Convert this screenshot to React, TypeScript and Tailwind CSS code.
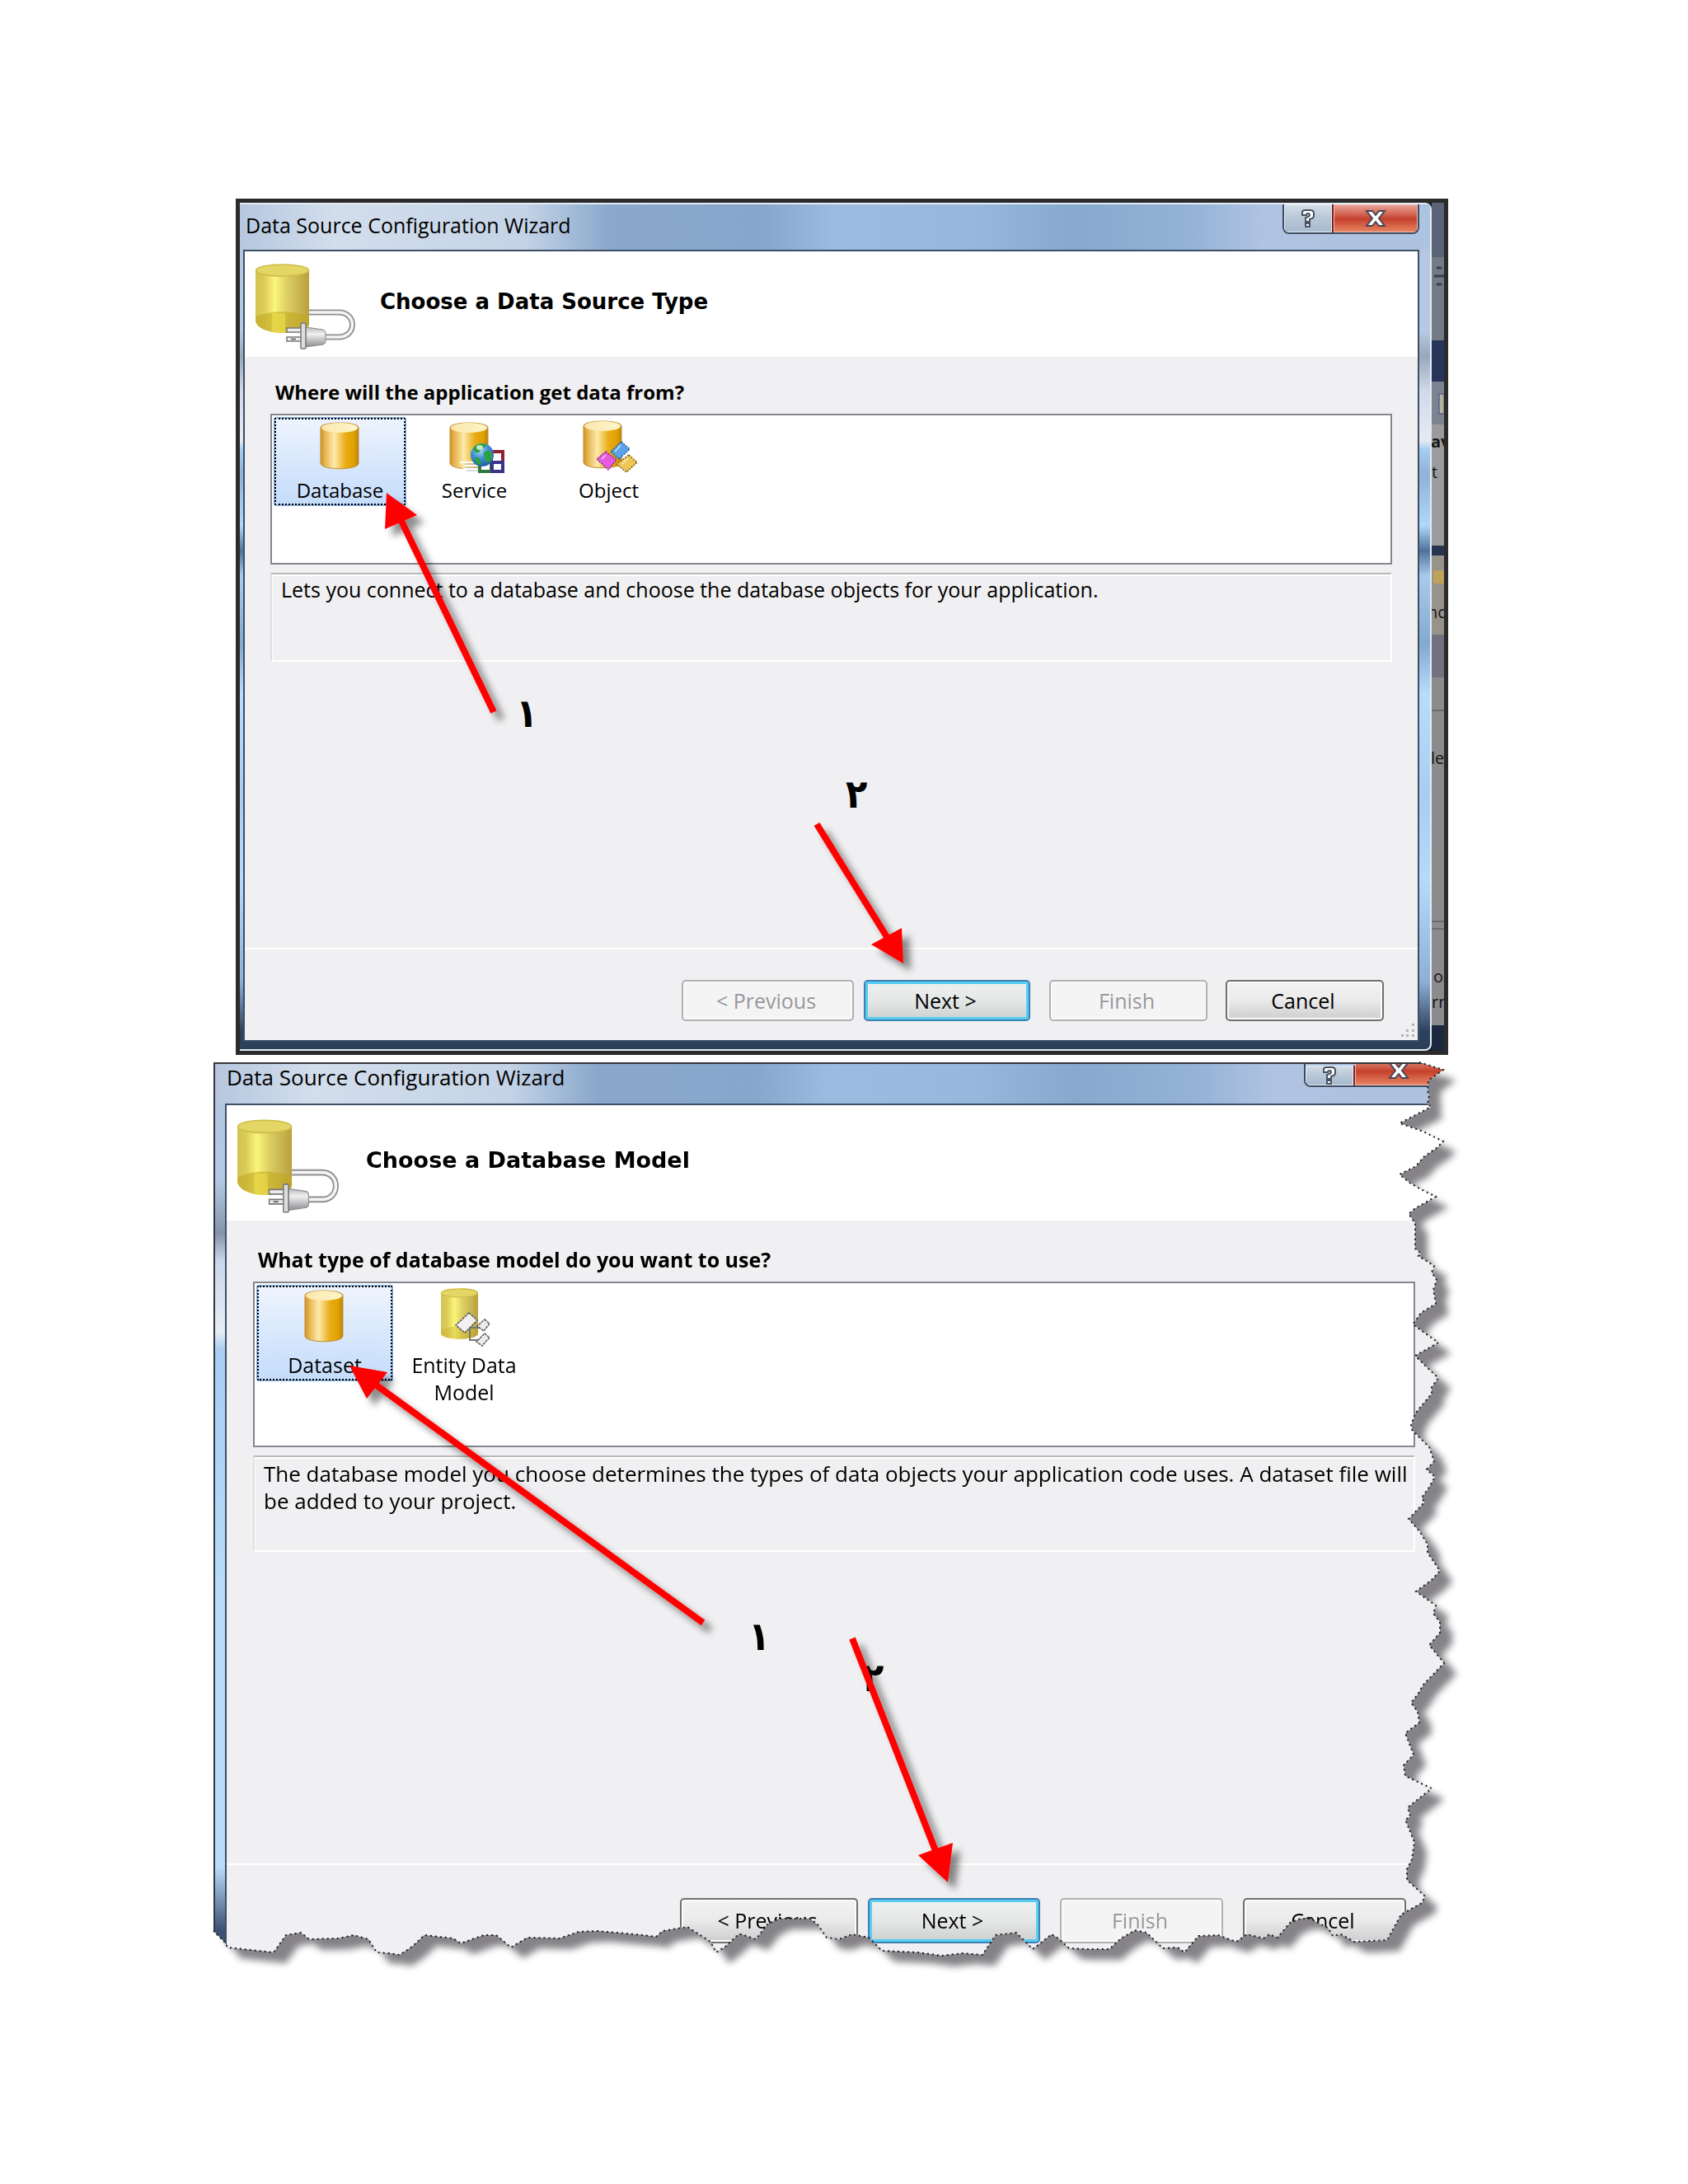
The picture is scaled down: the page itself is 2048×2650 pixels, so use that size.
import type { ReactNode } from "react";
import clsx from "clsx";

const TORN_EDGE =
  "1722,1289 1751,1298 1733,1311 1732,1324 1734,1329 1732,1339 1736,1343 1698,1363 1727,1373 1751,1385 1744,1392 1727,1404 1718,1415 1698,1425 1710,1435 1722,1442 1742,1452 1717,1466 1709,1473 1717,1484 1717,1515 1724,1521 1721,1524 1740,1536 1737,1544 1743,1553 1739,1565 1742,1582 1724,1593 1714,1607 1745,1629 1717,1645 1727,1655 1745,1672 1737,1683 1737,1691 1717,1715 1712,1729 1713,1735 1734,1756 1740,1773 1731,1783 1741,1792 1733,1806 1725,1817 1728,1823 1709,1843 1723,1859 1732,1874 1732,1884 1747,1906 1737,1917 1718,1931 1742,1948 1739,1958 1747,1968 1747,1981 1734,1996 1752,2018 1727,2044 1720,2056 1712,2066 1720,2077 1722,2090 1705,2103 1715,2129 1703,2142 1705,2155 1737,2170 1708,2193 1711,2204 1705,2208 1716,2235 1713,2256 1707,2268 1707,2281 1729,2301 1725,2309 1700,2323 1683,2354 1643,2356 1627,2347 1617,2349 1612,2340 1590,2328 1578,2328 1565,2333 1550,2351 1540,2347 1533,2352 1513,2347 1500,2356 1491,2353 1478,2348 1454,2349 1437,2369 1429,2363 1411,2364 1391,2345 1377,2342 1360,2352 1346,2365 1320,2365 1297,2364 1284,2352 1276,2347 1253,2365 1233,2345 1208,2348 1192,2372 1168,2370 1143,2373 1114,2369 1070,2367 1054,2351 1034,2347 1018,2353 1003,2351 992,2335 983,2328 945,2328 931,2335 917,2353 900,2347 896,2347 880,2362 869,2369 862,2356 834,2338 804,2343 796,2350 781,2348 725,2343 702,2344 679,2352 640,2351 628,2358 620,2363 602,2348 587,2348 559,2358 550,2352 515,2348 500,2362 485,2372 472,2370 457,2369 447,2353 429,2348 411,2352 375,2353 365,2345 347,2348 332,2369 304,2366 276,2363 273,2357 259,2343";

function Defs() {
  return (
    <svg className="absolute size-0" aria-hidden="true">
      <defs>
        <linearGradient id="gold" x1="0" x2="1" y1="0" y2="0">
          <stop offset="0" stopColor="#cf9323" />
          <stop offset="0.12" stopColor="#e8b551" />
          <stop offset="0.36" stopColor="#fdeaaa" />
          <stop offset="0.66" stopColor="#e9ac16" />
          <stop offset="0.88" stopColor="#e0a000" />
          <stop offset="1" stopColor="#b98212" />
        </linearGradient>
        <linearGradient id="goldTop" x1="0" x2="1" y1="0" y2="0">
          <stop offset="0" stopColor="#fbe7ae" />
          <stop offset="1" stopColor="#fdf5c8" />
        </linearGradient>
        <linearGradient id="glass" x1="0" x2="1" y1="0" y2="0">
          <stop offset="0" stopColor="#d2c34e" />
          <stop offset="0.16" stopColor="#dccb58" />
          <stop offset="0.36" stopColor="#fbf57a" />
          <stop offset="0.6" stopColor="#dccd62" />
          <stop offset="1" stopColor="#b9a03e" />
        </linearGradient>
        <linearGradient id="plug" x1="0" x2="0" y1="0" y2="1">
          <stop offset="0" stopColor="#b9b9bb" />
          <stop offset="0.35" stopColor="#f0f0f1" />
          <stop offset="1" stopColor="#8e8e92" />
        </linearGradient>
        <radialGradient id="globe" cx="0.4" cy="0.3" r="0.8">
          <stop offset="0" stopColor="#a9dbf5" />
          <stop offset="0.45" stopColor="#3f8fd6" />
          <stop offset="1" stopColor="#1d4f9c" />
        </radialGradient>
        <clipPath id="tear" clipPathUnits="objectBoundingBox">
          <polygon points={`259,1289 ${TORN_EDGE}`} transform="scale(0.00066979 0.00092166) translate(-259 -1289)" />
        </clipPath>
        <filter id="soft" x="-20%" y="-20%" width="150%" height="150%">
          <feDropShadow dx="9" dy="9" stdDeviation="4" floodColor="#000" floodOpacity="0.45" />
        </filter>
      </defs>
    </svg>
  );
}

function PlugIcon({ className }: { className: string }) {
  return (
    <svg viewBox="0 0 124 108" preserveAspectRatio="none" className={className} aria-hidden="true">
      <path d="M2 10 C2 1 67 1 67 10 V76 C67 80 50 86 35 86 C18 86 2 80 2 70Z" fill="url(#glass)" />
      <path d="M2 67 C14 58 55 58 67 67 V76 C67 80 50 86 35 86 C18 86 2 80 2 70Z" fill="#c2a820" opacity="0.6" />
      <path d="M22 62 H38 V86 H28 C24 86 22 84 22 80Z" fill="#f3e24d" opacity="0.55" />
      <ellipse cx="34.500" cy="10" rx="32" ry="7" fill="#e3d664" stroke="#cdbd47" strokeWidth="1.500" />
      <path d="M67 61 H103 C125 61 125 91 103 91 H86" fill="none" stroke="#8f8f92" strokeWidth="7" />
      <path d="M67 61 H103 C125 61 125 91 103 91 H86" fill="none" stroke="#f4f4f4" strokeWidth="3.500" />
      <path d="M57 80 H40 V85 H57 M57 91 H40 V96 H57" fill="#ededee" stroke="#77777a" strokeWidth="1.500" />
      <path d="M45 93.500 H51" stroke="#555" strokeWidth="1.500" />
      <path d="M63 79 L84 82 Q87 83 87 86 V96 Q87 99 84 100 L63 103Z" fill="url(#plug)" stroke="#88888b" />
      <rect x="57" y="74" width="6" height="31" rx="1" fill="#dededf" stroke="#77777a" strokeWidth="1.500" />
    </svg>
  );
}

function Cylinder({ x, y, h = 57 }: { x: number; y: number; h?: number }) {
  return (
    <g transform={`translate(${x} ${y})`}>
      <path
        d={`M0 7 C0 -1 46 -1 46 7 V${h - 7} C46 ${h + 2} 0 ${h + 2} 0 ${h - 7}Z`}
        fill="url(#gold)"
        stroke="#c08f30"
        strokeWidth="1"
      />
      <ellipse cx="23" cy="7" rx="22" ry="6" fill="url(#goldTop)" />
    </g>
  );
}

function TileSvg({ tall, children }: { tall?: boolean; children: ReactNode }) {
  return (
    <svg
      viewBox={tall ? "0 0 80 72" : "0 0 80 64"}
      className={clsx("w-20 shrink-0 overflow-visible", tall ? "h-18" : "h-16")}
      aria-hidden="true"
    >
      {children}
    </svg>
  );
}

function DatabaseIcon() {
  return (
    <TileSvg>
      <Cylinder x={16} y={1} />
    </TileSvg>
  );
}

function DatasetIcon() {
  return (
    <TileSvg tall>
      <Cylinder x={16} y={1} h={63} />
    </TileSvg>
  );
}

function ServiceIcon() {
  return (
    <TileSvg>
      <Cylinder x={10} y={1} />
      <path d="M22 50 H46 M28 54 H46 M26 58 H46 M30 62 H46" stroke="#fff" strokeWidth="2" />
      <path d="M28 52 H45 M28 56 H45 M30 60 H45" stroke="#b7b9c4" strokeWidth="1" />
      <rect x="60" y="37" width="14" height="13" fill="#fff" stroke="#8d2233" strokeWidth="4" />
      <rect x="46" y="50" width="14" height="11" fill="#fff" stroke="#2f7a3a" strokeWidth="4" />
      <rect x="61" y="50" width="13" height="11" fill="#fff" stroke="#39348a" strokeWidth="4" />
      <circle cx="49" cy="41" r="14" fill="url(#globe)" />
      <path d="M38 33 C42 27 50 26 54 29 C52 33 47 33 46 37 C43 40 39 38 38 33Z M52 37 C58 34 63 38 61 45 C58 51 54 52 53 47 C51 43 50 40 52 37Z M40 44 C45 43 49 47 47 53 C43 53 40 49 40 44Z" fill="#2da044" />
      <ellipse cx="46" cy="32" rx="4" ry="3" fill="#e8fbe4" opacity="0.8" />
    </TileSvg>
  );
}

function ObjectIcon() {
  return (
    <TileSvg>
      <Cylinder x={9} y={-1} h={58} />
      <polygon points="55,25 65,34 52,46 42,37" fill="#5ba4ea" stroke="#1f5da5" strokeWidth="1.500" strokeDasharray="2 1.500" />
      <polygon points="36,37 49,47 39,59 25,46" fill="#e45be0" stroke="#8f2a92" strokeWidth="1.500" strokeDasharray="2 1.500" />
      <polygon points="64,41 74,50 61,62 49,52" fill="#edc655" stroke="#7a5a12" strokeWidth="1.500" strokeDasharray="2 1.500" />
      <path d="M54 29 L47 37 M36 41 L31 46 M63 45 L56 52" stroke="#fff" strokeWidth="2" opacity="0.5" />
    </TileSvg>
  );
}

function EntityIcon() {
  return (
    <TileSvg tall>
      <path d="M12 5 C12 -3 57 -3 57 5 V54 C57 63 12 63 12 54Z" fill="url(#glass)" />
      <ellipse cx="34.500" cy="5" rx="22" ry="5" fill="#e3d664" stroke="#cbb944" />
      <path d="M12 50 C20 44 49 44 57 50 V54 C57 63 12 63 12 54Z" fill="#c2a820" opacity="0.35" />
      <path d="M47 44 V62 H58 M47 47 H60" fill="none" stroke="#77777a" strokeWidth="2" />
      <polygon points="46,29 56,38 41,53 30,44" fill="#f1f1f2" stroke="#58585b" strokeWidth="1.500" strokeDasharray="3 1" />
      <polygon points="65,37 71,42 64,51 56,45" fill="#ececed" stroke="#58585b" strokeWidth="1.500" strokeDasharray="3 1" />
      <polygon points="65,54 71,59 62,69 55,64" fill="#ececed" stroke="#58585b" strokeWidth="1.500" strokeDasharray="3 1" />
    </TileSvg>
  );
}

function Tile({ icon, label, selected, className }: { icon: ReactNode; label: string; selected?: boolean; className: string }) {
  return (
    <button
      type="button"
      role="option"
      aria-selected={!!selected}
      className={clsx(
        "flex flex-col items-center self-start rounded-[3px] border-2 pt-[3px] text-center",
        selected
          ? "border-[#86b0e2] bg-linear-to-b from-[#eef4fd] to-[#c4dcfb] outline-2 -outline-offset-3 outline-dotted outline-black"
          : "border-transparent",
        className,
      )}
    >
      {icon}
      <span className="mt-1 block px-4">{label}</span>
    </button>
  );
}

function CaptionButtons({ className, closeClass }: { className: string; closeClass: string }) {
  return (
    <div className={clsx("flex overflow-hidden rounded-b-lg border-2 border-t-0 border-[#3d4b5e]", className)}>
      <button
        type="button"
        aria-label="Help"
        className="flex w-[60px] shrink-0 items-center justify-center border-r-2 border-[#7c1f1d] bg-linear-to-b from-[#d5dfe9] from-0% via-[#b9c7d6] via-48% to-[#a6bacf] inset-shadow-[0_0_0_1px_#e8eff7]"
      >
        <svg viewBox="0 0 18 24" className="h-6 w-[18px]">
          <path d="M2 7 V5 Q2 2 5 2 H12 Q16 2 16 6 V9 Q16 12 11 13 V16 H6 V11 Q11 10 11 8 Q11 6 9 6 Q7 6 7 8 H2Z M6 18 H11 V22 H6Z" fill="#fff" stroke="#4a5260" strokeWidth="2" />
        </svg>
      </button>
      <button
        type="button"
        aria-label="Close"
        className={clsx(
          "flex shrink-0 items-center justify-center bg-linear-to-b from-[#e9a59c] from-0% via-[#c5402c] via-52% to-[#e88563] inset-shadow-[0_0_0_1px_#f0c2b8]",
          closeClass,
        )}
      >
        <svg viewBox="0 0 26 20" className="h-5 w-[26px]">
          <path d="M2 1 H9 L13 6 L17 1 H24 L17 10 L24 19 H17 L13 14 L9 19 H2 L9 10Z" fill="#fff" stroke="#4a4654" strokeWidth="2" />
        </svg>
      </button>
    </div>
  );
}

type Kind = "normal" | "primary" | "disabled";

function WizardButton({ kind = "normal", className, children }: { kind?: Kind; className: string; children: ReactNode }) {
  return (
    <button
      type="button"
      disabled={kind === "disabled"}
      className={clsx(
        "rounded-[5px] border-2 pr-1 text-center text-[25px]",
        kind === "normal" &&
          "border-[#707070] bg-linear-to-b from-[#f2f2f2] from-0% via-[#ebebeb] via-48% to-[#cfcdcf] inset-shadow-[0_0_0_2px_#fbfbfb]",
        kind === "primary" &&
          "border-[#3c7fb1] bg-linear-to-b from-[#eff1f1] from-0% via-[#e5e8e7] via-48% to-[#cdd0ce] inset-shadow-[0_0_0_3px_#57cdf3]",
        kind === "disabled" && "border-[#b1b1b3] bg-[#f5f4f5] text-[#97979a] inset-shadow-[0_0_0_2px_#fbfbfb]",
        className,
      )}
    >
      {children}
    </button>
  );
}

type Point = [number, number];

function Arrow({ tail, neck, head }: { tail: Point; neck: Point; head: [Point, Point, Point] }) {
  return (
    <g filter="url(#soft)" fill="#fe0000">
      <line x1={tail[0]} y1={tail[1]} x2={neck[0]} y2={neck[1]} stroke="#fe0000" strokeWidth="8" />
      <polygon points={head.map((p) => p.join(",")).join(" ")} />
    </g>
  );
}

function Digit({ x, y, children }: { x: number; y: number; children: string }) {
  return (
    <text x={x} y={y} className="fill-black font-['DejaVu_Sans_Condensed','DejaVu_Sans',sans-serif] text-[48px] font-bold">
      {children}
    </text>
  );
}

function SourceTypeWindow() {
  return (
    <section className="relative ml-[27px] flex border-[5px] border-[#2b2b2b] bg-[#141c28] text-[24px] leading-8">
      <div className="min-w-0 flex-1 rounded-r-lg border-t-2 border-r-2 border-b-2 border-[#e3ebf5] bg-[linear-gradient(180deg,#b3c5df_0%,#b7c8e4_15%,#97a8bb_18%,#d0d9ea_22%,#e6ebf3_28%,#a5cdf0_29%,#8fb2d6_32%,#b0d8f8_38%,#4f739b_41%,#a6cbea_44%,#84a9cf_52%,#b9dcfb_58%,#a9cdf0_70%,#b7dafa_80%,#8eafd6_92%,#2c3f5b_98%)]">
        <header className="flex h-[55px] items-start justify-between bg-[linear-gradient(90deg,#b5c7df_0%,#d3deec_8%,#c4d3e6_24%,#8aa8cc_31%,#86a6cb_44%,#9bbbe0_50%,#97b7dc_62%,#86a9cd_70%,#94b3d6_80%,#b0c3e2_86%,#aec3e0_100%)] pr-[13px] pl-[7px]">
          <h2 className="pt-[9px] text-[25px]">Data Source Configuration Wizard</h2>
          <CaptionButtons className="h-9" closeClass="w-[102px]" />
        </header>
        <div className="mr-[13px] mb-[9px] ml-[4px] border-2 border-[#3d4f66] bg-[#f0eff1]">
          <div className="flex h-32 items-start bg-white pt-[13px] pl-[11px]">
            <PlugIcon className="h-[108px] w-[124px]" />
            <h1 className="mt-8 ml-[29px] font-['DejaVu_Sans',sans-serif] text-[26px] font-bold">Choose a Data Source Type</h1>
          </div>
          <div className="pt-[27px] pr-[31px] pl-[31px]">
            <h3 id="source-label" className="pl-[6px] font-bold">Where will the application get data from?</h3>
            <div role="listbox" aria-labelledby="source-label" className="mt-[10px] flex h-[183px] gap-[2px] border-2 border-[#828790] bg-white pt-[2px] pl-[2px]">
              <Tile className="h-[108px] w-[161px]" icon={<DatabaseIcon />} label="Database" selected />
              <Tile className="h-[108px] w-[161px]" icon={<ServiceIcon />} label="Service" />
              <Tile className="h-[108px] w-[161px]" icon={<ObjectIcon />} label="Object" />
            </div>
            <p className="mt-[10px] h-[108px] border-2 border-t-[#b9b9bb] border-r-white border-b-white border-l-[#dededf] px-[11px] pt-[2px] text-[25px] inset-shadow-[1px_2px_0_#fff]">
              Lets you connect to a database and choose the database objects for your application.
            </p>
          </div>
          <footer className="mt-[347px] flex justify-end border-t-2 border-white pt-[37px] pr-[41px] pb-[23px]">
            <WizardButton kind="disabled" className="mr-3 h-[50px] w-[209px]">&lt; Previous</WizardButton>
            <WizardButton kind="primary" className="mr-[23px] h-[50px] w-[202px]">Next &gt;</WizardButton>
            <WizardButton kind="disabled" className="mr-[22px] h-[50px] w-48">Finish</WizardButton>
            <WizardButton className="h-[50px] w-48">Cancel</WizardButton>
          </footer>
        </div>
      </div>

      {/* Sliver of the desktop behind the dialog */}
      <svg viewBox="1737 246 15 1029" preserveAspectRatio="none" className="w-[15px] shrink-0 self-stretch bg-[#8b8b8d]" aria-hidden="true">
        <path d="M1737 246 H1752 V312 H1737Z" fill="#5a6476" />
        <path d="M1737 312 H1752 V413 H1737Z" fill="#727a83" />
        <path d="M1743 325 H1749 M1740 335 H1752 M1743 345 H1749" stroke="#3a3f47" strokeWidth="3" />
        <path d="M1737 413 H1752 V463 H1737Z" fill="#27355a" />
        <path d="M1737 463 H1752 V515 H1737Z" fill="#7d8491" />
        <path d="M1746 478 H1752 V502 H1746Z" fill="#b5b29a" stroke="#3a4a8a" />
        <path d="M1737 515 H1752 V662 H1737Z" fill="#9b9b9d" />
        <path d="M1737 662 H1752 V674 H1737Z" fill="#263452" />
        <path d="M1737 674 H1752 V770 H1737Z" fill="#98938a" />
        <path d="M1739 692 H1752 V708 H1739Z" fill="#c0a25a" />
        <path d="M1737 770 H1752 V822 H1737Z" fill="#73717f" />
        <path d="M1737 1118 H1752 M1737 1127 H1752 M1737 862 H1752" stroke="#6c6c6e" strokeWidth="2" />
        <path d="M1737 1244 H1752 V1275 H1737Z" fill="#1b2940" />
        <g className="fill-[#151518] text-[20px]">
          <text x="1736" y="543" className="font-bold">av</text>
          <text x="1737" y="580">t</text>
          <text x="1732" y="750">nc</text>
          <text x="1736" y="927">le</text>
          <text x="1739" y="1192">o</text>
          <text x="1737" y="1223">rn</text>
        </g>
      </svg>

      <svg viewBox="291 246 1461 1029" preserveAspectRatio="none" className="pointer-events-none absolute inset-0 size-full">
        <g fill="#b5b5b8">
          <path d="M1713 1242 h3 v3 h-3z M1713 1249 h3 v3 h-3z M1713 1255 h3 v3 h-3z M1706 1249 h3 v3 h-3z M1706 1255 h3 v3 h-3z M1700 1255 h3 v3 h-3z" />
        </g>
        <Digit x={626} y={882}>١</Digit>
        <Digit x={1026} y={980}>٢</Digit>
        <Arrow tail={[599, 864]} neck={[486, 630]} head={[[469, 598], [506, 625], [467, 642]]} />
        <Arrow tail={[991, 1000]} neck={[1078, 1140]} head={[[1096, 1169], [1057, 1146], [1094, 1126]]} />
      </svg>
    </section>
  );
}

function DatabaseModelWindow() {
  return (
    <section className="relative mt-[9px] mr-[5px] text-[25px] leading-[33px]">
      <div className="drop-shadow-[15px_13px_4px_#858387]">
        <div className="border-t-2 border-l-2 border-[#33373d] bg-[linear-gradient(180deg,#b3c5df_0%,#b7c8e4_13%,#8395ab_19%,#c9d6ea_22%,#e8eef6_30%,#a9cdf3_32%,#b9dcfb_60%,#b9dcfb_90%,#3c5273_97%)] [clip-path:url(#tear)]">
          <header className="flex h-12 items-start justify-between bg-[linear-gradient(90deg,#b5c7df_0%,#d3deec_8%,#c4d3e6_24%,#8aa8cc_31%,#86a6cb_44%,#9bbbe0_50%,#97b7dc_62%,#86a9cd_70%,#94b3d6_80%,#b0c3e2_86%,#aec3e0_100%)] pl-[14px]">
            <h2 className="text-[26px]">Data Source Configuration Wizard</h2>
            <CaptionButtons className="h-7 items-end" closeClass="h-9 w-[106px]" />
          </header>
          <div className="ml-[12px] border-t-2 border-l-2 border-[#3d4f66] bg-[#f0eff1]">
            <div className="flex h-[140px] items-start bg-white pt-[15px] pl-[11px]">
              <PlugIcon className="h-[118px] w-[126px]" />
              <h1 className="mt-[35px] ml-[32px] font-['DejaVu_Sans',sans-serif] text-[27px] font-bold">Choose a Database Model</h1>
            </div>
            <div className="pt-[31px] pr-[35px] pl-8">
              <h3 id="model-label" className="pl-[6px] font-bold">What type of database model do you want to use?</h3>
              <div role="listbox" aria-labelledby="model-label" className="mt-[10px] flex h-[201px] gap-[3px] border-2 border-[#828790] bg-white pt-[2px] pl-[2px]">
                <Tile className="h-[117px] w-[166px]" icon={<DatasetIcon />} label="Dataset" selected />
                <Tile className="w-[166px]" icon={<EntityIcon />} label="Entity Data Model" />
              </div>
              <p className="mt-[10px] h-[117px] border-2 border-t-[#b9b9bb] border-r-white border-b-white border-l-[#dededf] pt-1 pl-[11px] text-[26px] inset-shadow-[1px_2px_0_#fff]">
                The database model you choose determines the types of data objects your application code uses. A dataset file will be added to your project.
              </p>
            </div>
            <footer className="mt-[378px] flex justify-end border-t-2 border-white pt-10 pr-[46px] pb-4">
              <WizardButton className="mr-3 h-[55px] w-[216px]">&lt; Previous</WizardButton>
              <WizardButton kind="primary" className="mr-6 h-[55px] w-[209px]">Next &gt;</WizardButton>
              <WizardButton kind="disabled" className="mr-6 h-[55px] w-[198px]">Finish</WizardButton>
              <WizardButton className="h-[55px] w-[198px]">Cancel</WizardButton>
            </footer>
          </div>
        </div>
      </div>

      <svg viewBox="259 1289 1493 1085" preserveAspectRatio="none" className="pointer-events-none absolute inset-0 size-full overflow-visible">
        <polyline points={TORN_EDGE} fill="none" stroke="#1c1c1e" strokeWidth="2" strokeDasharray="2 4" />
        <Digit x={908} y={2002}>١</Digit>
        <Digit x={1046} y={2052}>٢</Digit>
        <Arrow tail={[853, 1969]} neck={[450, 1676]} head={[[424, 1657], [470, 1665], [445, 1697]]} />
        <Arrow tail={[1034, 1988]} neck={[1136, 2248]} head={[[1150, 2284], [1114, 2251], [1156, 2236]]} />
      </svg>
    </section>
  );
}

export default function App() {
  return (
    <main className="min-h-screen bg-white pt-[241px] pr-[291px] pb-[276px] pl-[259px] font-['Open_Sans','Noto_Sans',sans-serif] text-black">
      <Defs />
      <SourceTypeWindow />
      <DatabaseModelWindow />
    </main>
  );
}
